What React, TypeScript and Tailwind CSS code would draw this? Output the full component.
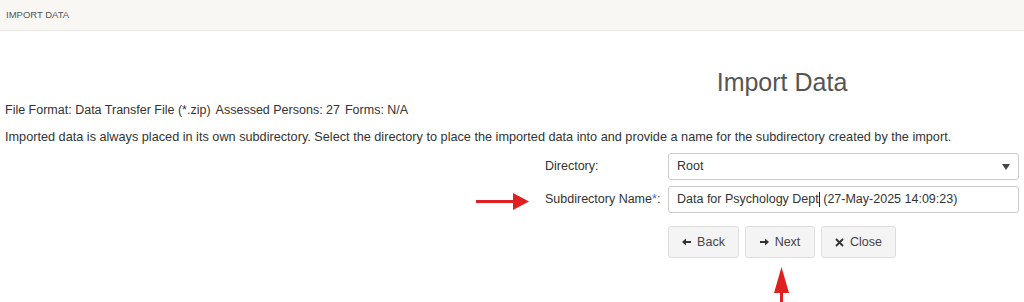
import React from "react";

function ArrowLeft() {
  return (
    <svg width="9" height="8" viewBox="0 0 9 8" className="mr-[6px]">
      <path d="M0 4 L4 0.5 L4 3 L9 3 L9 5 L4 5 L4 7.5 Z" fill="#333" />
    </svg>
  );
}
function ArrowRight() {
  return (
    <svg width="9" height="8" viewBox="0 0 9 8" className="mr-[6px]">
      <path d="M9 4 L5 0.5 L5 3 L0 3 L0 5 L5 5 L5 7.5 Z" fill="#333" />
    </svg>
  );
}
function XIcon() {
  return (
    <svg width="9" height="9" viewBox="0 0 9 9" className="mr-[6px]">
      <path d="M1 1 L8 8 M8 1 L1 8" stroke="#333" strokeWidth="1.8" />
    </svg>
  );
}

export default function App() {
  const font = { fontFamily: '"Liberation Sans", Arial, sans-serif' };
  return (
    <div className="relative w-[1024px] h-[302px] overflow-hidden bg-white text-[#333]" style={font}>
      <div className="h-[31px] bg-[#f8f7f4] border-b border-[#e9e8e6] flex items-center px-[6px]">
        <span className="text-[9.5px] text-[#555]">IMPORT DATA</span>
      </div>
      <div className="flex justify-end pt-[36px]">
        <div className="w-[484px] text-center text-[25px] leading-[30px] text-[#555]">Import Data</div>
      </div>
      <div className="px-[5px] text-[12.5px]">
        <div className="mt-[4px] flex gap-[5px] leading-[18px]">
          <span>File Format: Data Transfer File (*.zip)</span>
          <span>Assessed Persons: 27</span>
          <span>Forms: N/A</span>
        </div>
        <div className="mt-[9px] leading-[18px] text-[12.7px]">
          Imported data is always placed in its own subdirectory. Select the directory to place the imported data into and provide a name for the subdirectory created by the import.
        </div>
      </div>
      <div className="pl-[545px] pr-[5px] mt-[7px] text-[12.5px]">
        <div className="flex items-center h-[27px]">
          <div className="w-[123px]">Directory:</div>
          <div className="flex-1 h-[27px] border border-[#ccc] rounded-[3px] flex items-center justify-between px-[8px]">
            <span>Root</span>
            <svg width="8" height="6" viewBox="0 0 8 6"><path d="M0 0 L8 0 L4 6 Z" fill="#444" /></svg>
          </div>
        </div>
        <div className="flex items-center h-[27px] mt-[6px]">
          <div className="w-[123px]">
            Subdirectory Name<span className="text-[#1a73e8]">*</span>:
          </div>
          <div className="flex-1 h-[27px] border border-[#ccc] rounded-[3px] flex items-center px-[8px]">
            <span>Data for Psychology Dept</span>
            <span className="inline-block w-px h-[15px] bg-[#222]" />
            <span>&nbsp;(27-May-2025 14:09:23)</span>
          </div>
        </div>
        <div className="flex gap-[6px] mt-[13px] pl-[123px]">
          <button className="h-[32px] w-[71px] bg-[#f4f4f4] border border-[#ddd] rounded-[3px] flex items-center justify-center text-[#444]">
            <ArrowLeft />Back
          </button>
          <button className="h-[32px] w-[70px] bg-[#f4f4f4] border border-[#ddd] rounded-[3px] flex items-center justify-center text-[#444]">
            <ArrowRight />Next
          </button>
          <button className="h-[32px] w-[75px] bg-[#f4f4f4] border border-[#ddd] rounded-[3px] flex items-center justify-center text-[#444]">
            <XIcon />Close
          </button>
        </div>
      </div>
      <svg className="absolute left-[476px] top-[192px]" width="54" height="19" viewBox="0 0 54 19">
        <rect x="0" y="8" width="38" height="3" fill="#e02020" />
        <path d="M37 1 L53 9.5 L37 18 Z" fill="#e02020" />
      </svg>
      <svg className="absolute left-[773px] top-[267px]" width="17" height="35" viewBox="0 0 17 35">
        <path d="M8.5 0 L16 26 L1 26 Z" fill="#e02020" />
        <rect x="7" y="25" width="3" height="10" fill="#e02020" />
      </svg>
    </div>
  );
}
